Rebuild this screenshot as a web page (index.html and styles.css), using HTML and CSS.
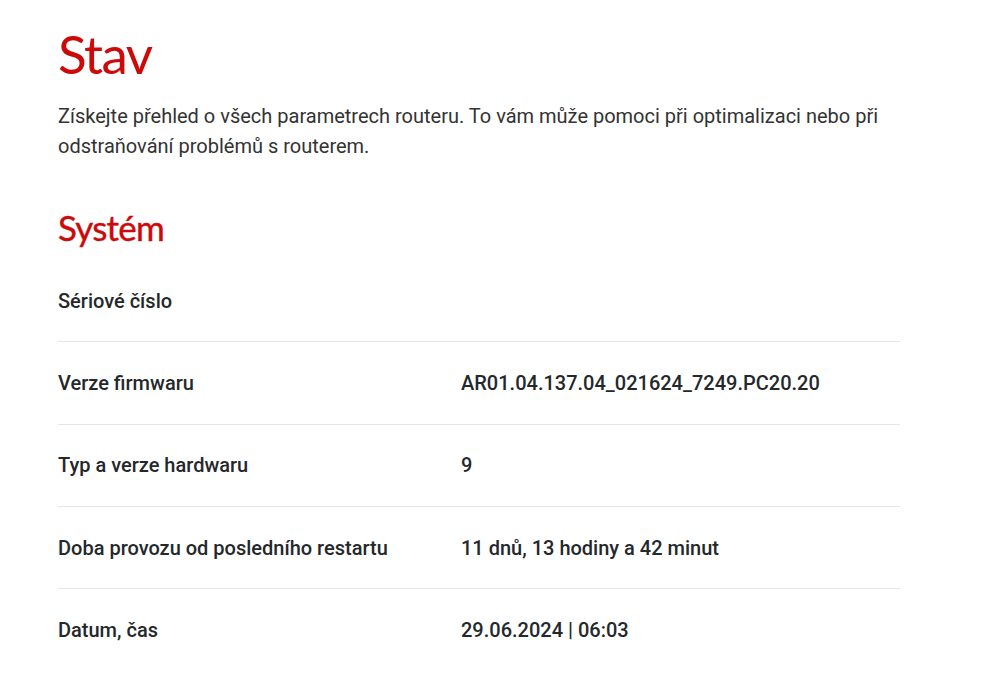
FILE: index.html
```html
<!DOCTYPE html>
<html lang="cs">
<head>
  <meta charset="UTF-8">
  <title>Stav</title>
  <link rel="stylesheet" href="styles.css">
</head>
<body>

  <!-- Status page -->
  <main class="page">
    <h1 class="page-title">Stav</h1>
    <p class="intro">Získejte přehled o všech parametrech routeru. To vám může pomoci při optimalizaci nebo při odstraňování problémů s routerem.</p>

    <!-- System -->
    <section class="section">
      <h2 class="section-title">Systém</h2>
      <div class="rows">
        <div class="row">
          <span class="label">Sériové číslo</span>
          <span class="value"></span>
        </div>
        <div class="row">
          <span class="label">Verze firmwaru</span>
          <span class="value">AR01.04.137.04_021624_7249.PC20.20</span>
        </div>
        <div class="row">
          <span class="label">Typ a verze hardwaru</span>
          <span class="value">9</span>
        </div>
        <div class="row">
          <span class="label">Doba provozu od posledního restartu</span>
          <span class="value">11 dnů, 13 hodiny a 42 minut</span>
        </div>
        <div class="row">
          <span class="label">Datum, čas</span>
          <span class="value">29.06.2024 | 06:03</span>
        </div>
      </div>
    </section>
  </main>

</body>
</html>
```

FILE: styles.css
```css
body {
  margin: 0;
  background: #fff;
  font-family: Roboto, "Noto Sans", sans-serif;
  color: #25282b;
}
.page {
  width: 842px;
  padding: 22px 0 0 58px;
}
.page-title {
  font-family: Lato, sans-serif;
  font-weight: 400;
  font-size: 53px;
  line-height: 64px;
  color: #cc0a0a;
  margin: 0;
  letter-spacing: -1.5px;
}
.intro {
  font-size: 20px;
  line-height: 30px;
  margin: 15px 0 0;
  color: #333;
}
.section {
  margin-top: 46px;
}
.section-title {
  font-family: Lato, sans-serif;
  font-weight: 400;
  font-size: 35px;
  line-height: 40px;
  color: #cc0a0a;
  margin: 0;
  letter-spacing: -0.8px;
  -webkit-text-stroke: 0.4px #cc0a0a;
}
.rows {
  margin-top: 13px;
}
.row {
  display: flex;
  align-items: center;
  height: 81.3px;
  border-bottom: 1px solid #e6e6e6;
  font-size: 20px;
  font-weight: 500;
}
.row:last-child {
  border-bottom: none;
}
.label {
  width: 403px;
}
```
